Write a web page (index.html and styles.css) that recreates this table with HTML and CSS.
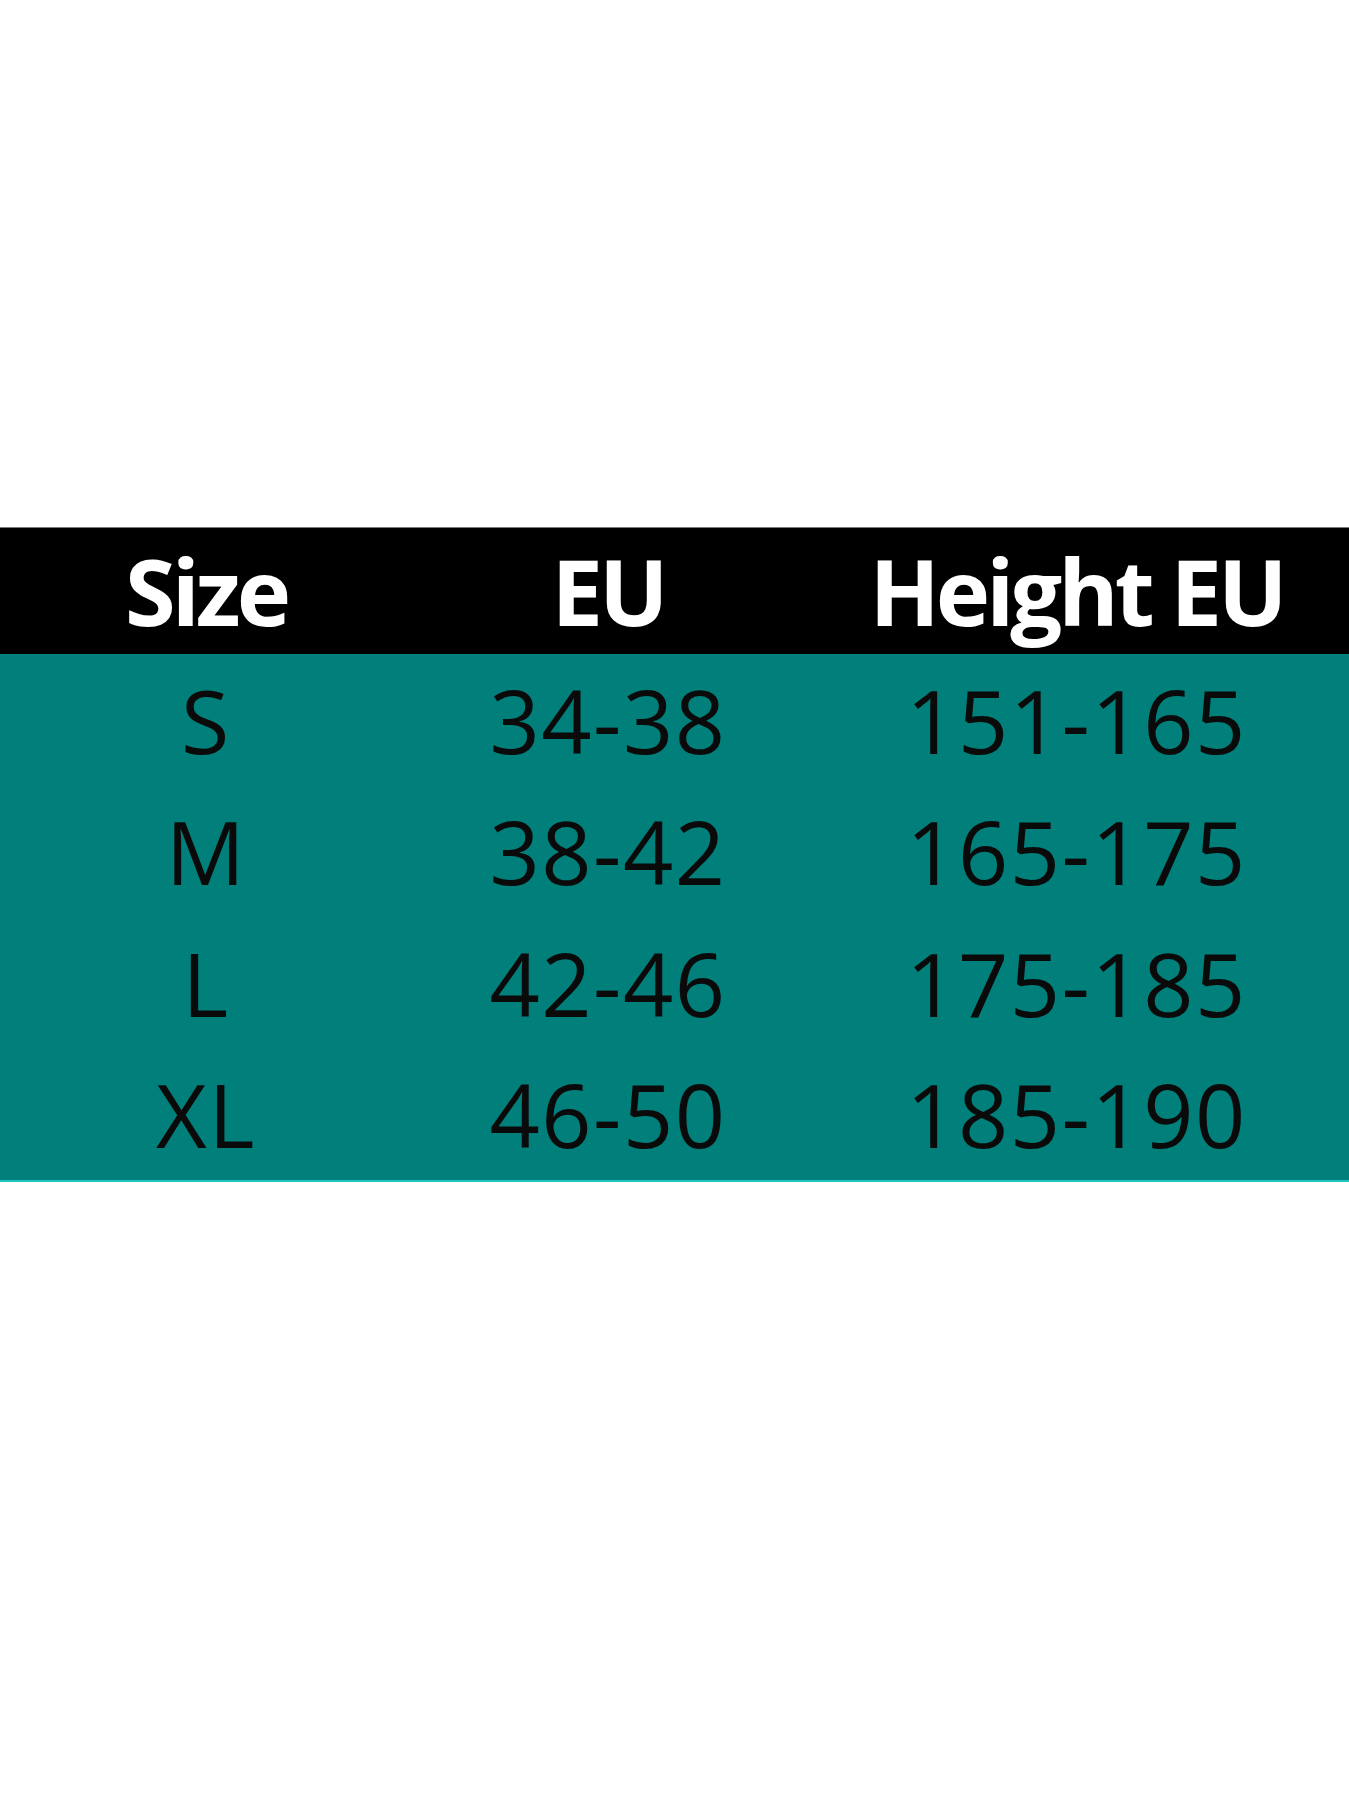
FILE: index.html
```html
<!DOCTYPE html>
<html>
<head>
<meta charset="utf-8">
<link rel="stylesheet" href="styles.css">
</head>
<body>
<div class="page">
  <div class="chart">
    <div class="row head">
      <div class="c c1">Size</div>
      <div class="c c2">EU</div>
      <div class="c c3">Height EU</div>
    </div>
    <div class="body">
      <div class="row"><div class="c c1">S</div><div class="c c2">34-38</div><div class="c c3">151-165</div></div>
      <div class="row"><div class="c c1">M</div><div class="c c2">38-42</div><div class="c c3">165-175</div></div>
      <div class="row"><div class="c c1">L</div><div class="c c2">42-46</div><div class="c c3">175-185</div></div>
      <div class="row"><div class="c c1">XL</div><div class="c c2">46-50</div><div class="c c3">185-190</div></div>
    </div>
  </div>
</div>
</body>
</html>
```
FILE: styles.css
```css
html, body {
  margin: 0;
  padding: 0;
  background: #ffffff;
}
.page {
  width: 1349px;
  height: 1800px;
  padding-top: 527px;
  box-sizing: border-box;
  font-family: "Open Sans", "Liberation Sans", sans-serif;
}
.chart {
  width: 1349px;
}
.row {
  display: grid;
  grid-template-columns: 412px 392px 545px;
  align-items: center;
  height: 132px;
}
.head {
  height: 127px;
  background: #000000;
  border-top: 1px solid #7a7a7a;
  box-sizing: border-box;
  color: #ffffff;
  font-weight: 700;
  font-size: 92px;
  letter-spacing: -4px;
}
.body {
  background: #007f7b;
  border-bottom: 2px solid #1fc4c0;
  color: #0a0a0a;
  font-size: 88px;
  letter-spacing: 1.5px;
}
.body .row {
  height: 131.5px;
}
.c {
  text-align: center;
  line-height: 1;
  white-space: nowrap;
}
```
